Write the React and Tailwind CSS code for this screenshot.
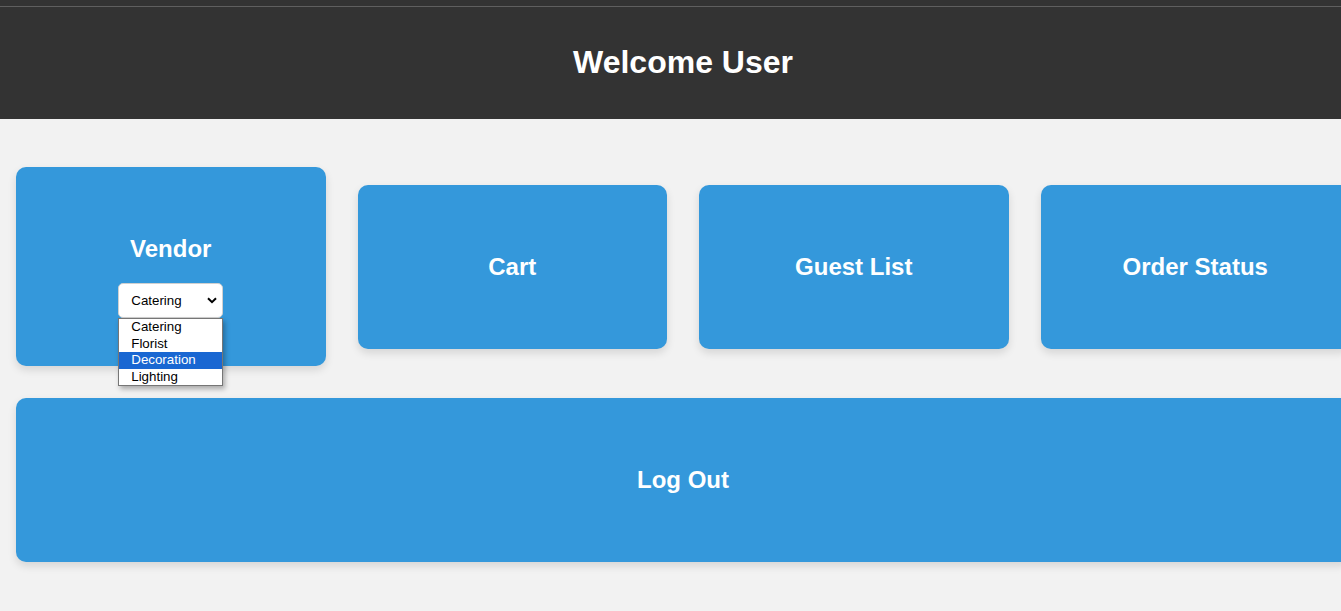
import { useState } from "react";

const font = { fontFamily: '"Liberation Sans", Arial, sans-serif' };

function VendorSelect() {
  const options = ["Catering", "Florist", "Decoration", "Lighting"];
  const [hover] = useState("Decoration");

  return (
    <div className="relative w-[105px] mx-auto">
      <div className="h-[35px] bg-white rounded-[5px] border border-[#d0d0d0] flex items-center justify-between pl-[12px] pr-[5px] text-[13.33px] text-black">
        <span>Catering</span>
        <svg width="10" height="7" viewBox="0 0 10 7">
          <path d="M1 1.2 L5 5.2 L9 1.2" fill="none" stroke="#000" strokeWidth="2" />
        </svg>
      </div>
      {/* open dropdown */}
      <div className="absolute left-0 top-[35px] w-[105px] bg-white border border-[#767676] shadow-[2px_3px_5px_rgba(0,0,0,0.3)] z-10">
        {options.map((o) => (
          <div
            key={o}
            className={`h-[16.5px] leading-[16.5px] pl-[12px] text-[13.33px] text-left ${o === hover ? "bg-[#1967d2] text-white" : "text-black"}`}
          >
            {o}
          </div>
        ))}
      </div>
    </div>
  );
}

function Card({ title, children }) {
  return (
    <div className="flex-1 bg-[#3498db] rounded-[10px] shadow-[0_4px_8px_rgba(0,0,0,0.12)] py-[48px] text-center text-white">
      <h2 className="text-[24px] leading-[28px] font-bold my-[20px]">{title}</h2>
      {children}
    </div>
  );
}

export default function App() {
  return (
    <div className="w-[1366px] min-h-[611px] bg-[#f2f2f2]" style={font}>
      <div className="h-[6px] bg-[#333333]" />
      <header className="h-[113px] bg-[#333333] border-t border-[#5f5f5f] flex items-center justify-center">
        <h1 className="text-[32px] leading-[37px] font-bold text-white -mt-[2px]">Welcome User</h1>
      </header>

      <main className="px-[16px] pt-[48px] pb-[49px] flex flex-col gap-[32px]">
        <div className="flex items-center gap-[32px]">
          <Card title="Vendor">
            <VendorSelect />
          </Card>
          <Card title="Cart" />
          <Card title="Guest List" />
          <Card title="Order Status" />
        </div>
        <Card title="Log Out" />
      </main>
    </div>
  );
}
